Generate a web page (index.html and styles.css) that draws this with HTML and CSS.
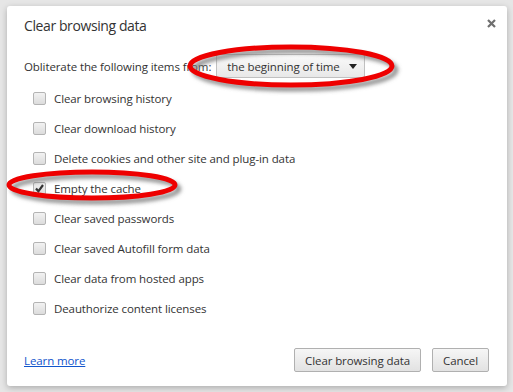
FILE: index.html
```html
<!DOCTYPE html>
<html lang="en">
<head>
    <meta charset="UTF-8">
    <title>Clear browsing data</title>
    <link rel="stylesheet" href="styles.css">
</head>
<body>
    <div class="page">
        <div class="dialog">
            <button class="close" aria-label="Close">
                <svg width="9" height="9" viewBox="0 0 9 9"><path d="M1 1L8 8M8 1L1 8" stroke="#6f6f6f" stroke-width="2.2"/></svg>
            </button>

            <h1 class="title">Clear browsing data</h1>

            <div class="from-row">
                <span>Obliterate the following items from:</span>
                <div class="select">
                    <span>the beginning of time</span>
                    <span class="arrow"></span>
                </div>
            </div>

            <ul class="options">
                <li><span class="box"></span>Clear browsing history</li>
                <li><span class="box"></span>Clear download history</li>
                <li><span class="box"></span>Delete cookies and other site and plug-in data</li>
                <li><span class="box checked"><svg width="11" height="11" viewBox="0 0 11 11"><path d="M2 5.5L4.4 8.3L9 2" fill="none" stroke="#333" stroke-width="2.2"/></svg></span>Empty the cache</li>
                <li><span class="box"></span>Clear saved passwords</li>
                <li><span class="box"></span>Clear saved Autofill form data</li>
                <li><span class="box"></span>Clear data from hosted apps</li>
                <li><span class="box"></span>Deauthorize content licenses</li>
            </ul>

            <div class="footer">
                <a href="#" class="learn">Learn more</a>
                <div class="buttons">
                    <button class="btn">Clear browsing data</button>
                    <button class="btn">Cancel</button>
                </div>
            </div>
        </div>

        <!-- hand drawn annotation rings -->
        <svg class="marks" width="513" height="392" viewBox="0 0 513 392">
            <defs>
                <filter id="shade" x="-10%" y="-40%" width="120%" height="180%">
                    <feGaussianBlur stdDeviation="2"/>
                </filter>
            </defs>
            <ellipse cx="295" cy="70" rx="101" ry="19" fill="none" stroke="#7a7a7a" stroke-width="4" filter="url(#shade)"/>
            <ellipse cx="291" cy="66" rx="101" ry="19" fill="none" stroke="#ee0000" stroke-width="5"/>
            <ellipse cx="96" cy="189" rx="83" ry="13" fill="none" stroke="#7a7a7a" stroke-width="4" filter="url(#shade)"/>
            <ellipse cx="92" cy="185" rx="83" ry="13" fill="none" stroke="#ee0000" stroke-width="5"/>
        </svg>
    </div>
</body>
</html>
```

FILE: styles.css
```css
body {
    margin: 0;
    font-family: 'Open Sans', 'Noto Sans', sans-serif;
    background: #e6e6e6;
    color: #333;
}
.page {
    position: relative;
    width: 513px;
    height: 392px;
    overflow: hidden;
    padding: 6px 0 0 7px;
    box-sizing: border-box;
}
.dialog {
    position: relative;
    display: flex;
    flex-direction: column;
    width: 500px;
    height: 380px;
    box-sizing: border-box;
    padding: 0 18px 14px 17px;
    background: #fff;
    border-radius: 3px;
    box-shadow: 0 2px 6px rgba(0, 0, 0, 0.25);
    font-size: 11.5px;
    letter-spacing: -0.1px;
}
.close {
    position: absolute;
    top: 10px;
    right: 11px;
    padding: 0;
    border: none;
    background: none;
}
.title {
    margin: 10px 0 0;
    font-size: 14px;
    font-weight: normal;
    letter-spacing: -0.4px;
    line-height: 20px;
}
.from-row {
    display: flex;
    align-items: center;
    gap: 5px;
    margin-top: 18px;
    height: 24px;
}
.select {
    display: flex;
    align-items: center;
    justify-content: space-between;
    width: 149px;
    height: 24px;
    box-sizing: border-box;
    padding: 0 7px 0 10px;
    border: 1px solid #c0c0c0;
    border-radius: 2px;
    background: linear-gradient(#fafafa, #e8e8e8);
}
.arrow {
    width: 0;
    height: 0;
    border-left: 4px solid transparent;
    border-right: 4px solid transparent;
    border-top: 5px solid #222;
}
.options {
    list-style: none;
    margin: 5px 0 0;
    padding: 0 0 0 9px;
}
.options li {
    display: flex;
    align-items: center;
    height: 30px;
}
.box {
    display: flex;
    align-items: center;
    justify-content: center;
    width: 13px;
    height: 13px;
    box-sizing: border-box;
    margin-right: 8px;
    border: 1px solid #b4b4b4;
    border-radius: 2px;
    background: linear-gradient(#f2f2f2, #dcdcdc);
}
.footer {
    display: flex;
    align-items: center;
    justify-content: space-between;
    margin-top: auto;
}
.learn {
    color: #15c;
    text-decoration: underline;
}
.buttons {
    display: flex;
    gap: 11px;
}
.btn {
    height: 24px;
    padding: 0 10px;
    font-family: inherit;
    font-size: 11.5px;
    letter-spacing: -0.1px;
    color: #333;
    border: 1px solid #b0b0b0;
    border-radius: 2px;
    background: linear-gradient(#f6f6f6, #e2e2e2);
}
.marks {
    position: absolute;
    left: 0;
    top: 0;
    pointer-events: none;
}
```
